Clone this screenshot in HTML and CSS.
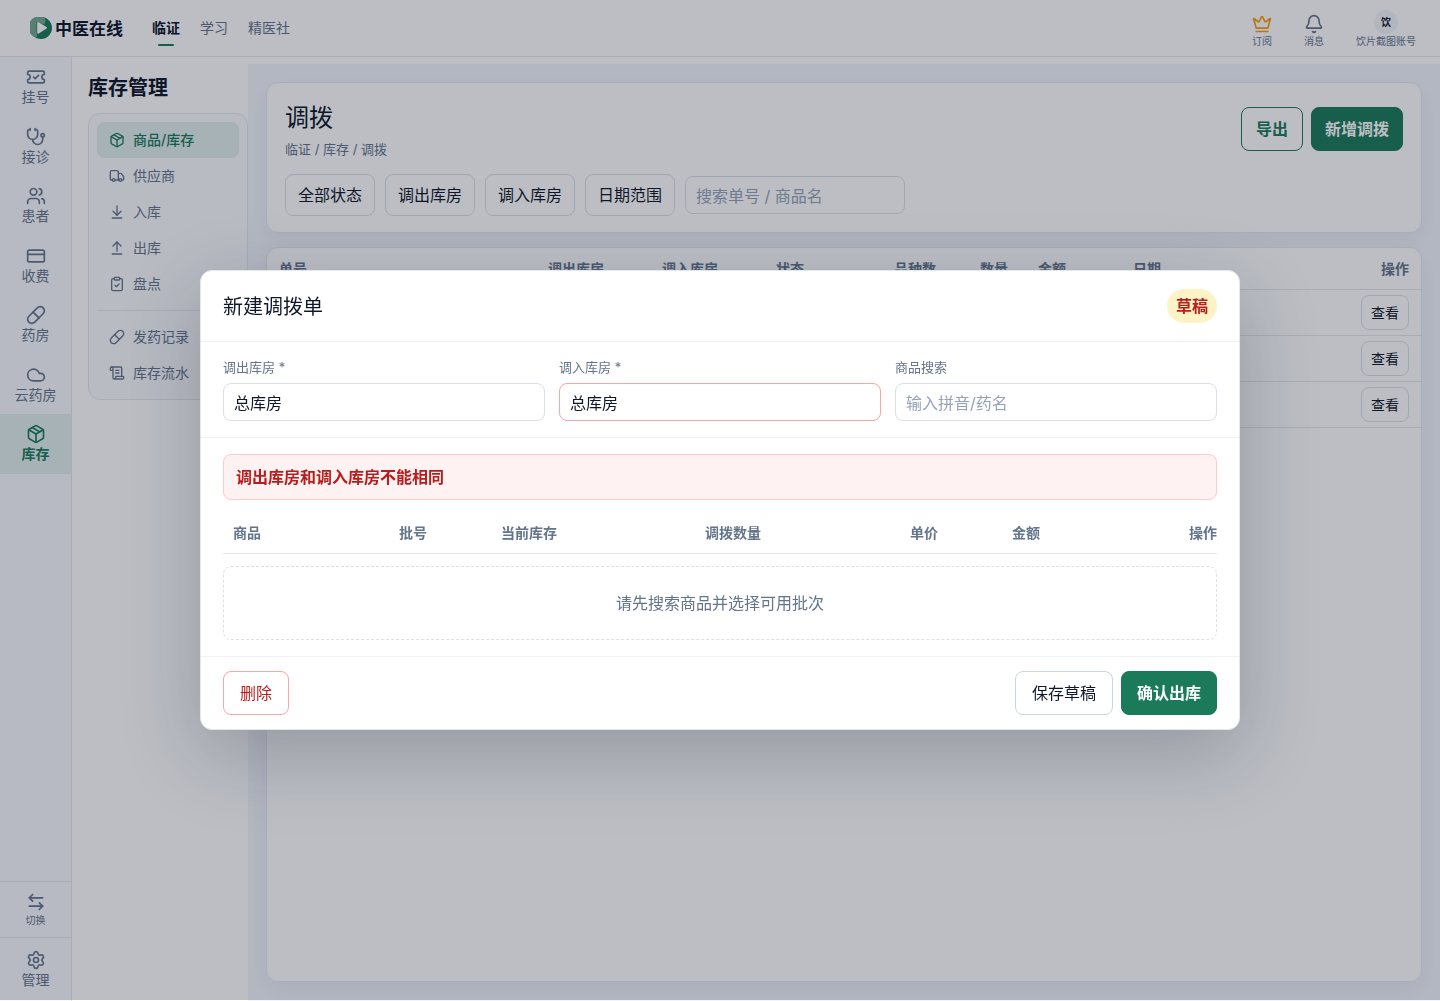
FILE: index.html
```html
<!DOCTYPE html>
<html lang="zh-CN">
<head>
<meta charset="utf-8">
<meta name="viewport" content="width=device-width, initial-scale=1">
<title>调拨 - 中医在线</title>
<link rel="stylesheet" href="styles.css">
</head>
<body>
<svg class="sprite" aria-hidden="true">
  <symbol id="i-ticket" viewBox="0 0 24 24"><path d="M2 9a3 3 0 0 1 0 6v2a2 2 0 0 0 2 2h16a2 2 0 0 0 2-2v-2a3 3 0 0 1 0-6V7a2 2 0 0 0-2-2H4a2 2 0 0 0-2 2Z"/><path d="m9 12 2 2 4-4"/></symbol>
  <symbol id="i-steth" viewBox="0 0 24 24"><path d="M11 2v2"/><path d="M5 2v2"/><path d="M5 3H4a2 2 0 0 0-2 2v4a6 6 0 0 0 12 0V5a2 2 0 0 0-2-2h-1"/><path d="M8 15a6 6 0 0 0 12 0v-3"/><circle cx="20" cy="10" r="2"/></symbol>
  <symbol id="i-users" viewBox="0 0 24 24"><path d="M16 21v-2a4 4 0 0 0-4-4H6a4 4 0 0 0-4 4v2"/><circle cx="9" cy="7" r="4"/><path d="M22 21v-2a4 4 0 0 0-3-3.870"/><path d="M16 3.130a4 4 0 0 1 0 7.750"/></symbol>
  <symbol id="i-card" viewBox="0 0 24 24"><rect width="20" height="14" x="2" y="5" rx="2"/><path d="M2 10h20"/></symbol>
  <symbol id="i-pill" viewBox="0 0 24 24"><path d="m10.5 20.5 10-10a4.95 4.95 0 1 0-7-7l-10 10a4.95 4.95 0 1 0 7 7Z"/><path d="m8.5 8.5 7 7"/></symbol>
  <symbol id="i-cloud" viewBox="0 0 24 24"><path d="M17.5 19H9a7 7 0 1 1 6.71-9h1.79a4.5 4.5 0 1 1 0 9Z"/></symbol>
  <symbol id="i-package" viewBox="0 0 24 24"><path d="M11 21.73a2 2 0 0 0 2 0l7-4A2 2 0 0 0 21 16V8a2 2 0 0 0-1-1.73l-7-4a2 2 0 0 0-2 0l-7 4A2 2 0 0 0 3 8v8a2 2 0 0 0 1 1.73z"/><path d="M12 22V12"/><path d="M3.29 7 12 12l8.71-5"/><path d="m7.5 4.27 9 5.15"/></symbol>
  <symbol id="i-swap" viewBox="0 0 24 24"><path d="M8 3 4 7l4 4"/><path d="M4 7h16"/><path d="m16 21 4-4-4-4"/><path d="M20 17H4"/></symbol>
  <symbol id="i-gear" viewBox="0 0 24 24"><path d="M9.671 4.136a2.34 2.34 0 0 1 4.659 0 2.34 2.34 0 0 0 3.319 1.915 2.34 2.34 0 0 1 2.33 4.033 2.34 2.34 0 0 0 0 3.831 2.34 2.34 0 0 1-2.33 4.033 2.34 2.34 0 0 0-3.319 1.915 2.34 2.34 0 0 1-4.659 0 2.34 2.34 0 0 0-3.32-1.915 2.34 2.34 0 0 1-2.33-4.033 2.34 2.34 0 0 0 0-3.831A2.34 2.34 0 0 1 6.35 6.051a2.34 2.34 0 0 0 3.319-1.915"/><circle cx="12" cy="12" r="3"/></symbol>
  <symbol id="i-truck" viewBox="0 0 24 24"><path d="M14 18V6a2 2 0 0 0-2-2H4a2 2 0 0 0-2 2v11a1 1 0 0 0 1 1h2"/><path d="M15 18H9"/><path d="M19 18h2a1 1 0 0 0 1-1v-3.65a1 1 0 0 0-.22-.624l-3.48-4.35A1 1 0 0 0 17.52 8H14"/><circle cx="17" cy="18" r="2"/><circle cx="7" cy="18" r="2"/></symbol>
  <symbol id="i-down" viewBox="0 0 24 24"><path d="M12 17V3"/><path d="m6 11 6 6 6-6"/><path d="M19 21H5"/></symbol>
  <symbol id="i-up" viewBox="0 0 24 24"><path d="m18 9-6-6-6 6"/><path d="M12 3v14"/><path d="M5 21h14"/></symbol>
  <symbol id="i-clip" viewBox="0 0 24 24"><rect width="8" height="4" x="8" y="2" rx="1"/><path d="M16 4h2a2 2 0 0 1 2 2v14a2 2 0 0 1-2 2H6a2 2 0 0 1-2-2V6a2 2 0 0 1 2-2h2"/><path d="m9 14 2 2 4-4"/></symbol>
  <symbol id="i-scroll" viewBox="0 0 24 24"><path d="M15 12h-5"/><path d="M15 8h-5"/><path d="M19 17V5a2 2 0 0 0-2-2H4"/><path d="M8 21h12a2 2 0 0 0 2-2v-1a1 1 0 0 0-1-1H11a1 1 0 0 0-1 1v1a2 2 0 1 1-4 0V5a2 2 0 1 0-4 0v2a1 1 0 0 0 1 1h3"/></symbol>
  <symbol id="i-crown" viewBox="0 0 24 24"><path d="M11.562 3.266a.5.5 0 0 1 .876 0L15.39 8.87a1 1 0 0 0 1.516.294L21.183 5.5a.5.5 0 0 1 .798.519l-2.834 10.246a1 1 0 0 1-.956.734H5.81a1 1 0 0 1-.957-.734L2.02 6.02a.5.5 0 0 1 .798-.519l4.276 3.664a1 1 0 0 0 1.516-.294z"/><path d="M5 21h14"/></symbol>
  <symbol id="i-bell" viewBox="0 0 24 24"><path d="M10.268 21a2 2 0 0 0 3.464 0"/><path d="M3.262 15.326A1 1 0 0 0 4 17h16a1 1 0 0 0 .74-1.673C19.41 13.956 18 12.499 18 8A6 6 0 0 0 6 8c0 4.499-1.411 5.956-2.738 7.326"/></symbol>
</svg>

<div class="app">
  <header class="topbar">
    <a class="brand" href="#">
      <svg class="brand-mark" viewBox="0 0 22 22" aria-hidden="true">
        <circle cx="11" cy="11" r="11" fill="#1b7a5a"/>
        <path d="M14.500 .6A11 11 0 1 0 6 20.800Q8 19 6.500 15V5L14 7.500Q16.500 4 14.500 .6Z" fill="#6fa893"/>
        <path d="M8.500 5.200 16.500 10Q17.600 10.800 16.500 11.600L8.800 16.600Q7.200 17.200 7.200 15.600V6Q7.200 4.600 8.500 5.200Z" fill="#fff"/>
        <g fill="#e8912d"><circle cx="8" cy="3.500" r=".6"/><circle cx="11" cy="3.500" r=".6"/><circle cx="14" cy="3.500" r=".6"/><circle cx="5" cy="6.500" r=".6"/><circle cx="4.500" cy="9.500" r=".6"/><circle cx="4.500" cy="12.500" r=".6"/></g>
      </svg>
      <span>中医在线</span>
    </a>
    <nav class="topnav">
      <a class="active" href="#">临证</a>
      <a href="#">学习</a>
      <a href="#">精医社</a>
    </nav>
    <div class="account">
      <a class="quick" href="#"><svg class="ico crown"><use href="#i-crown"/></svg>订阅</a>
      <a class="quick" href="#"><svg class="ico"><use href="#i-bell"/></svg>消息</a>
      <a class="quick" href="#"><span class="avatar">饮</span>饮片截图账号</a>
    </div>
  </header>

  <div class="body">
    <nav class="rail">
      <a href="#"><svg class="ico"><use href="#i-ticket"/></svg>挂号</a>
      <a href="#"><svg class="ico"><use href="#i-steth"/></svg>接诊</a>
      <a href="#"><svg class="ico"><use href="#i-users"/></svg>患者</a>
      <a href="#"><svg class="ico"><use href="#i-card"/></svg>收费</a>
      <a href="#"><svg class="ico"><use href="#i-pill"/></svg>药房</a>
      <a href="#"><svg class="ico"><use href="#i-cloud"/></svg>云药房</a>
      <a class="active" href="#"><svg class="ico"><use href="#i-package"/></svg>库存</a>
      <a class="switch" href="#"><svg class="ico"><use href="#i-swap"/></svg>切换</a>
      <a class="manage" href="#"><svg class="ico"><use href="#i-gear"/></svg>管理</a>
    </nav>

    <aside class="side">
      <h2>库存管理</h2>
      <nav class="menu">
        <a class="active" href="#"><svg class="ico"><use href="#i-package"/></svg>商品/库存</a>
        <a href="#"><svg class="ico"><use href="#i-truck"/></svg>供应商</a>
        <a href="#"><svg class="ico"><use href="#i-down"/></svg>入库</a>
        <a href="#"><svg class="ico"><use href="#i-up"/></svg>出库</a>
        <a href="#"><svg class="ico"><use href="#i-clip"/></svg>盘点</a>
        <hr>
        <a href="#"><svg class="ico"><use href="#i-pill"/></svg>发药记录</a>
        <a href="#"><svg class="ico"><use href="#i-scroll"/></svg>库存流水</a>
      </nav>
    </aside>

    <main class="main">
      <section class="card intro">
        <div class="intro-top">
          <div>
            <h1>调拨</h1>
            <p class="crumbs">临证 / 库存 / 调拨</p>
          </div>
          <div class="actions">
            <button class="btn outline" type="button">导出</button>
            <button class="btn primary" type="button">新增调拨</button>
          </div>
        </div>
        <div class="filters">
          <button class="btn filter" type="button">全部状态</button>
          <button class="btn filter" type="button">调出库房</button>
          <button class="btn filter" type="button">调入库房</button>
          <button class="btn filter" type="button">日期范围</button>
          <input class="field search" type="text" placeholder="搜索单号 / 商品名" aria-label="搜索单号 / 商品名">
        </div>
      </section>
      <section class="card list">
        <table class="orders">
          <colgroup><col class="c-no"><col class="c-wh"><col class="c-wh"><col class="c-state"><col class="c-kind"><col class="c-qty"><col class="c-sum"><col class="c-date"><col></colgroup>
          <thead><tr><th>单号</th><th>调出库房</th><th>调入库房</th><th>状态</th><th>品种数</th><th>数量</th><th>金额</th><th>日期</th><th class="end">操作</th></tr></thead>
          <tbody>
            <tr><td colspan="8"></td><td class="end"><button class="btn small" type="button">查看</button></td></tr>
            <tr><td colspan="8"></td><td class="end"><button class="btn small" type="button">查看</button></td></tr>
            <tr><td colspan="8"></td><td class="end"><button class="btn small" type="button">查看</button></td></tr>
          </tbody>
        </table>
      </section>
    </main>
  </div>
</div>

<div class="overlay">
  <div class="dialog" role="dialog" aria-modal="true" aria-labelledby="dialog-title">
    <header class="dialog-head">
      <h2 id="dialog-title">新建调拨单</h2>
      <span class="badge">草稿</span>
    </header>
    <div class="dialog-form">
      <div class="control"><label for="from">调出库房 *</label><select class="field" id="from"><option>总库房</option></select></div>
      <div class="control"><label for="to">调入库房 *</label><select class="field invalid" id="to"><option>总库房</option></select></div>
      <div class="control"><label for="goods">商品搜索</label><input class="field" id="goods" type="text" placeholder="输入拼音/药名"></div>
    </div>
    <div class="dialog-body">
      <p class="alert" role="alert">调出库房和调入库房不能相同</p>
      <table class="items">
        <colgroup><col class="w-goods"><col class="w-batch"><col class="w-stock"><col class="w-move"><col class="w-price"><col class="w-sum"><col></colgroup>
        <thead><tr><th>商品</th><th>批号</th><th>当前库存</th><th>调拨数量</th><th>单价</th><th>金额</th><th class="end">操作</th></tr></thead>
      </table>
      <p class="empty">请先搜索商品并选择可用批次</p>
    </div>
    <footer class="dialog-foot">
      <button class="btn danger" type="button">删除</button>
      <div class="actions">
        <button class="btn plain" type="button">保存草稿</button>
        <button class="btn primary wide" type="button">确认出库</button>
      </div>
    </footer>
  </div>
</div>
</body>
</html>
```
FILE: styles.css
```css
:root {
  --ink: #0f172a;
  --muted: #64748b;
  --line: #e2e8f0;
  --green: #1b7a5a;
  --rule: #e5e7eb;
}
* { box-sizing: border-box; }
body {
  margin: 0;
  background: #fff;
  color: var(--ink);
  font: 14px/20px Inter, "Noto Sans CJK SC", sans-serif;
}
h1, h2, p { margin: 0; }
a { color: inherit; text-decoration: none; }
button, input, select { font: inherit; color: inherit; }
.sprite { display: none; }
.ico {
  width: 20px;
  height: 20px;
  fill: none;
  stroke: currentColor;
  stroke-width: 2;
  stroke-linecap: round;
  stroke-linejoin: round;
}
.app { display: flex; flex-direction: column; min-height: 100vh; }

/* top bar */
.topbar {
  display: flex;
  align-items: center;
  height: 57px;
  padding: 0 24px 0 30px;
  border-bottom: 1px solid var(--rule);
}
.brand { display: flex; align-items: center; gap: 3px; font-size: 17px; font-weight: 700; }
.brand span { padding-top: 2px; }
.brand-mark { width: 22px; height: 22px; }
.topnav { display: flex; gap: 20px; margin-left: 29px; color: var(--muted); }
.topnav .active { position: relative; color: var(--ink); font-weight: 700; }
.topnav .active::after {
  content: "";
  position: absolute;
  left: 6px;
  right: 6px;
  bottom: -8px;
  height: 2px;
  border-radius: 1px;
  background: var(--green);
}
.account { display: flex; gap: 32px; margin-left: auto; padding-top: 2px; }
.quick {
  display: flex;
  flex-direction: column;
  align-items: center;
  justify-content: flex-end;
  color: var(--muted);
  font-size: 10px;
  line-height: 14px;
}
.crown { color: #f59e0b; }
.avatar {
  width: 24px;
  height: 24px;
  border-radius: 50%;
  background: #f1f5f9;
  color: var(--ink);
  font-weight: 700;
  line-height: 24px;
  text-align: center;
}

.body { display: flex; flex: 1; }

/* left rail */
.rail {
  display: flex;
  flex-direction: column;
  width: 72px;
  border-right: 1px solid var(--rule);
  background: #f8fafc;
  color: var(--muted);
}
.rail a {
  display: flex;
  flex-direction: column;
  align-items: center;
  justify-content: center;
  height: 60px;
}
.rail a:nth-child(even) { height: 59px; }
.rail .active { background: #e2efee; color: var(--green); font-weight: 700; }
.rail a.switch:nth-child(n) {
  height: 56px;
  margin-top: auto;
  border-top: 1px solid var(--rule);
  font-size: 10px;
  line-height: 16px;
}
.rail .manage { height: 64px; border-top: 1px solid var(--rule); }

/* section menu */
.side { width: 176px; padding: 16px 0 0 16px; }
.side h2 { font-size: 20px; line-height: 30px; }
.menu {
  margin-top: 10px;
  padding: 8px;
  border: 1px solid var(--rule);
  border-radius: 12px;
  background: #fafbfd;
  color: var(--muted);
}
.menu a {
  display: flex;
  align-items: center;
  gap: 8px;
  height: 36px;
  padding: 0 12px;
  border-radius: 8px;
}
.menu .ico { width: 16px; height: 16px; }
.menu .active { background: #e2efee; color: var(--green); font-weight: 500; }
.menu hr { margin: 8px 0; border: 0; border-top: 1px solid var(--line); }

/* page content */
.main {
  display: flex;
  flex: 1;
  flex-direction: column;
  gap: 14px;
  min-width: 0;
  margin-top: 7px;
  padding: 18px 18px 19px;
  background: #f3f6fc;
}
.card {
  border: 1px solid var(--line);
  border-radius: 12px;
  background: #fff;
  box-shadow: 0 8px 24px rgba(15, 23, 42, .05);
}
.intro { padding: 18px 18px 16px; }
.intro-top { display: flex; justify-content: space-between; align-items: flex-start; }
.intro-top .actions { margin-top: 6px; }
.intro h1 { font-size: 24px; font-weight: 400; line-height: 34px; }
.crumbs { margin-top: 4px; color: var(--muted); font-size: 13px; }
.actions { display: flex; gap: 8px; }
.filters { display: flex; align-items: center; gap: 10px; margin-top: 15px; }
.btn {
  height: 44px;
  padding: 0 12px;
  border: 1px solid #cbd5e1;
  border-radius: 8px;
  background: #fff;
  font-size: 16px;
  line-height: 24px;
}
.outline { padding: 0 14px; border-color: var(--green); color: var(--green); font-weight: 700; }
.primary { padding: 0 13px; border-color: var(--green); background: var(--green); color: #fff; font-weight: 700; }
.filter { height: 42px; border-color: #d9dfe8; }
.field {
  width: 100%;
  height: 38px;
  padding: 2px 10px 0;
  border: 1px solid #d9dfe8;
  border-radius: 8px;
  background: #fff;
  font-size: 16px;
  appearance: none;
}
.field::placeholder { color: #94a3b8; }
.search { width: 220px; }
.list { flex: 1; overflow: hidden; }

table { width: 100%; border-spacing: 0; table-layout: fixed; }
th { color: var(--muted); font-size: 14px; font-weight: 700; text-align: left; }
th, td { border-bottom: 1px solid var(--rule); }
.orders th { height: 42px; padding: 0 12px; }
.orders td { height: 46px; padding: 0 12px; }
table .end { text-align: right; }
.c-no { width: 269px; }
.c-wh { width: 114px; }
.c-state { width: 118px; }
.c-kind { width: 86px; }
.c-qty { width: 58px; }
.c-sum { width: 95px; }
.c-date { width: 160px; }
.small { height: 35px; padding: 0 9px; border-color: #d9dfe8; font-size: 14px; line-height: 20px; }

/* dialog */
.overlay {
  position: fixed;
  inset: 0 0 1px;
  display: flex;
  align-items: center;
  justify-content: center;
  background: rgba(15, 23, 42, .28);
}
.dialog {
  width: min(1040px, calc(100% - 32px));
  border: 1px solid var(--line);
  border-radius: 12px;
  background: #fff;
  box-shadow: 0 24px 80px rgba(15, 23, 42, .24);
}
.dialog-head {
  display: flex;
  align-items: center;
  justify-content: space-between;
  padding: 18px 22px;
  border-bottom: 1px solid #eef2f7;
}
.dialog-head h2 { padding-top: 2px; font-size: 20px; font-weight: 400; line-height: 28px; }
.badge {
  padding: 5px 9px;
  border-radius: 17px;
  background: #fef3c7;
  color: #b91c1c;
  font-size: 16px;
  font-weight: 700;
  line-height: 24px;
}
.dialog-form {
  display: grid;
  grid-template-columns: repeat(3, 1fr);
  gap: 14px;
  padding: 15px 22px 16px;
  border-bottom: 1px solid #eef2f7;
}
.control { display: grid; gap: 6px; }
.control label { color: var(--muted); font-size: 13px; }
.invalid { border-color: #fca5a5; }
.dialog-body { padding: 16px 22px; }
.alert {
  padding: 10px 12px;
  border: 1px solid #fecaca;
  border-radius: 8px;
  background: #fef2f2;
  color: #b91c1c;
  font-size: 16px;
  font-weight: 700;
  line-height: 24px;
}
.items { margin-top: 12px; }
.items th { height: 42px; padding: 0 10px; }
.items .end { padding-right: 0; }
.w-goods { width: 166px; }
.w-batch { width: 102px; }
.w-stock { width: 204px; }
.w-move { width: 205px; }
.w-price { width: 102px; }
.w-sum { width: 102px; }
.empty {
  margin-top: 12px;
  padding: 24px;
  border: 1px dashed #dde1e7;
  border-radius: 8px;
  color: var(--muted);
  font-size: 16px;
  line-height: 24px;
  text-align: center;
}
.dialog-foot {
  display: flex;
  justify-content: space-between;
  padding: 14px 22px;
  border-top: 1px solid #eef2f7;
}
.plain { padding: 0 16px; }
.wide { padding: 0 15px; }
.danger { padding: 0 16px; border-color: #fca5a5; color: #b91c1c; }
```
